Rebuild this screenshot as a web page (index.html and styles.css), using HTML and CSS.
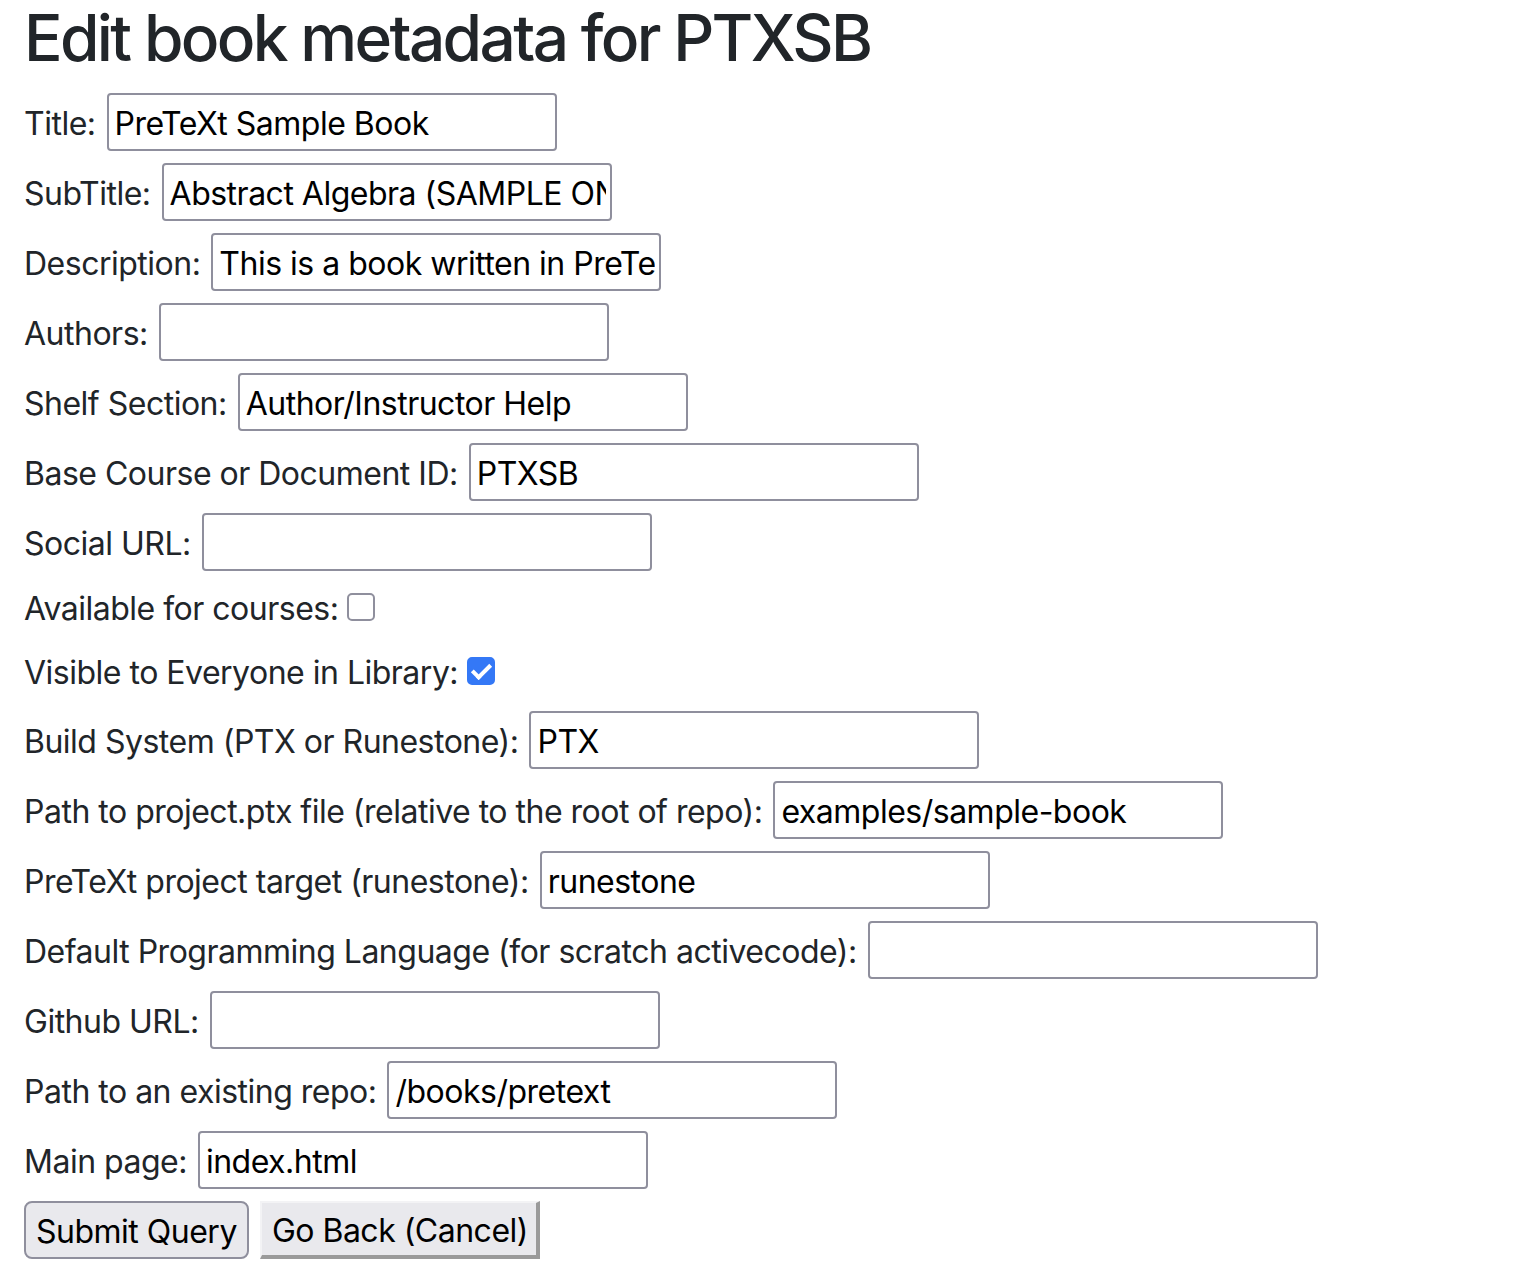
FILE: index.html
```html
<html>

<head>
    <meta charset="UTF-8">
    <meta name="viewport" content="width=device-width,initial-scale=1">
    <title>Edit book metadata</title>
    <link rel="stylesheet" href="styles.css">
</head>

<body>
    <div class="container">
        <h1>Edit book metadata for PTXSB</h1>
        <form class="meta">
            <div class="row"><label for="title">Title:</label> <input id="title" value="PreTeXt Sample Book"></div>
            <div class="row"><label for="subtitle">SubTitle:</label> <input id="subtitle" value="Abstract Algebra (SAMPLE ONLY)"></div>
            <div class="row"><label for="desc">Description:</label> <input id="desc" value="This is a book written in PreTeXt"></div>
            <div class="row"><label for="authors">Authors:</label> <input id="authors" value=""></div>
            <div class="row"><label for="shelf">Shelf Section:</label> <input id="shelf" value="Author/Instructor Help"></div>
            <div class="row"><label for="base">Base Course or Document ID:</label> <input id="base" value="PTXSB"></div>
            <div class="row"><label for="social">Social URL:</label> <input id="social" value=""></div>
            <div class="row check"><label for="courses">Available for courses:</label> <input id="courses" type="checkbox"></div>
            <div class="row check"><label for="visible">Visible to Everyone in Library:</label> <input id="visible" type="checkbox" checked></div>
            <div class="row"><label for="build">Build System (PTX or Runestone):</label> <input id="build" value="PTX"></div>
            <div class="row"><label for="path">Path to project.ptx file (relative to the root of repo):</label> <input id="path" value="examples/sample-book"></div>
            <div class="row"><label for="target">PreTeXt project target (runestone):</label> <input id="target" value="runestone"></div>
            <div class="row"><label for="lang">Default Programming Language (for scratch activecode):</label> <input id="lang" value=""></div>
            <div class="row"><label for="github">Github URL:</label> <input id="github" value=""></div>
            <div class="row"><label for="repo">Path to an existing repo:</label> <input id="repo" value="/books/pretext"></div>
            <div class="row"><label for="main">Main page:</label> <input id="main" value="index.html"></div>
            <div class="row buttons">
                <button type="submit" class="submit">Submit Query</button>
                <button type="button" class="cancel">Go Back (Cancel)</button>
            </div>
        </form>
    </div>
</body>

</html>
```

FILE: styles.css
```css
* {
    box-sizing: border-box;
}

body {
    margin: 0;
    font-family: Inter, "Liberation Sans", sans-serif;
    font-size: 32px;
    line-height: 1.5;
    letter-spacing: -0.5px;
    color: #212529;
    background-color: #fff;
}

.container {
    padding: 0 24px;
}

h1 {
    font-size: 64px;
    font-weight: 500;
    line-height: 1.2;
    margin: 0 0 16px;
    letter-spacing: -2.65px;
}

.meta {
    display: flex;
    flex-direction: column;
    row-gap: 12px;
}

.row {
    display: flex;
    align-items: center;
    column-gap: 11px;
    height: 58px;
    white-space: nowrap;
}

.row label {
    padding-top: 4px;
}

.row.check {
    height: 52px;
    align-items: flex-start;
    column-gap: 9px;
}

.row.check label {
    line-height: 48px;
    padding-top: 2px;
}

input {
    font: inherit;
    letter-spacing: inherit;
    color: #000;
    width: 450px;
    height: 58px;
    padding: 5px 4px 1px 6px;
    border: 2px solid #8f8f9d;
    border-radius: 4px;
    background-color: #fff;
    outline: none;
}

input[type="checkbox"] {
    appearance: none;
    -webkit-appearance: none;
    position: relative;
    width: 28px;
    height: 28px;
    padding: 0;
    margin: 10px 0 0;
    border-radius: 5px;
}

input[type="checkbox"]:checked {
    background-color: #3478f6;
    border-color: #3478f6;
}

input[type="checkbox"]:checked::after {
    content: "";
    position: absolute;
    left: 7px;
    top: 1px;
    width: 7px;
    height: 15px;
    border: solid #fff;
    border-width: 0 4px 4px 0;
    transform: rotate(45deg);
}

.buttons {
    column-gap: 11px;
}

button {
    font: inherit;
    letter-spacing: inherit;
    color: #000;
    height: 58px;
    padding: 4px 10px 0;
    background-color: #e9e9ed;
    cursor: pointer;
}

.submit {
    border: 2px solid #8f8f9d;
    border-radius: 8px;
}

.cancel {
    padding: 4px 8px 0 10px;
    border-style: solid;
    border-width: 2px 4px 4px 2px;
    border-color: #f3f3f5 #9a9a9a #9a9a9a #f3f3f5;
    border-radius: 0;
}
```
